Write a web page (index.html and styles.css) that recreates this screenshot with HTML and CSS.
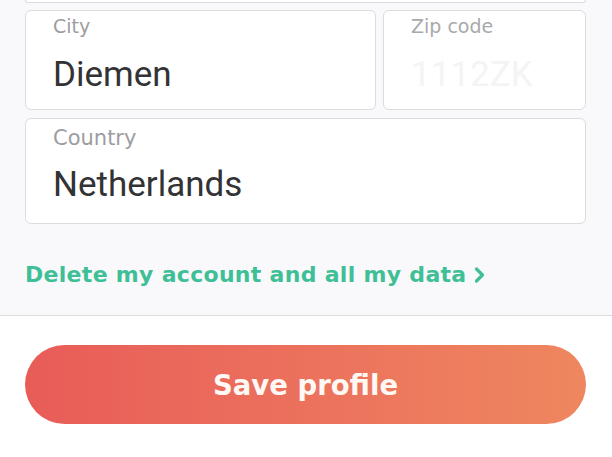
FILE: index.html
```html
<!DOCTYPE html>
<html>
<head>
<meta charset="utf-8">
<link rel="stylesheet" href="styles.css">
</head>
<body>
<div class="form">
  <div class="field-tail"></div>
  <div class="row">
    <div class="field city">
      <div class="label">City</div>
      <div class="value">Diemen</div>
    </div>
    <div class="field zip">
      <div class="label">Zip code</div>
      <div class="value placeholder">1112ZK</div>
    </div>
  </div>
  <div class="field country">
    <div class="label">Country</div>
    <div class="value">Netherlands</div>
  </div>
  <a class="delete" href="#">Delete my account and all my data<svg class="chev" width="13" height="18" viewBox="0 0 13 18"><path d="M3.5 3 L9.5 9 L3.5 15" fill="none" stroke="currentColor" stroke-width="3.2" stroke-linecap="round" stroke-linejoin="round"/></svg></a>
</div>
<div class="footer">
  <button class="save">Save profile</button>
</div>
</body>
</html>
```
FILE: styles.css
```css
html, body {
  margin: 0;
  padding: 0;
  background: #ffffff;
  font-family: Roboto, "Noto Sans", sans-serif;
}
.form {
  background: #f9f9fc;
  padding: 0 26px 0 25px;
  border-bottom: 1px solid #dcdcde;
  height: 316px;
  box-sizing: border-box;
}
.field-tail {
  height: 2px;
  border: 1px solid #dcdcdf;
  border-top: none;
  border-radius: 0 0 6px 6px;
  background: #fff;
  margin-bottom: 7px;
}
.row {
  display: flex;
  gap: 7px;
  margin-bottom: 8px;
}
.field {
  background: #fff;
  border: 1px solid #dcdcdf;
  border-radius: 6px;
  box-sizing: border-box;
  padding: 4px 0 0 27px;
}
.city {
  width: 351px;
  height: 100px;
}
.zip {
  flex: 1;
  height: 100px;
}
.country {
  height: 106px;
  padding-top: 7px;
}
.label {
  font-family: "DejaVu Sans", sans-serif;
  font-size: 19px;
  line-height: 22px;
  color: #9d9da1;
}
.country .label {
  font-size: 21px;
  line-height: 25px;
}
.zip .label {
  color: #a9a9ab;
}
.value {
  font-size: 35px;
  line-height: 40px;
  color: #333335;
  margin-top: 18px;
}
.country .value {
  margin-top: 14px;
}
.placeholder {
  color: #f4f4f5;
}
.delete {
  display: inline-flex;
  align-items: center;
  gap: 6px;
  margin-top: 38px;
  font-family: "DejaVu Sans", sans-serif;
  font-size: 22px;
  font-weight: 700;
  letter-spacing: 0.3px;
  color: #3fbf96;
  text-decoration: none;
}
.chev {
  display: block;
}
.footer {
  padding: 29px 26px 0 25px;
}
.save {
  display: block;
  width: 100%;
  height: 79px;
  border: none;
  border-radius: 40px;
  background: linear-gradient(90deg, #e85c58 0%, #eb6d5c 40%, #ee875f 100%);
  color: #fff8f4;
  font-family: "DejaVu Sans", sans-serif;
  font-size: 27.5px;
  font-weight: 700;
}
```
